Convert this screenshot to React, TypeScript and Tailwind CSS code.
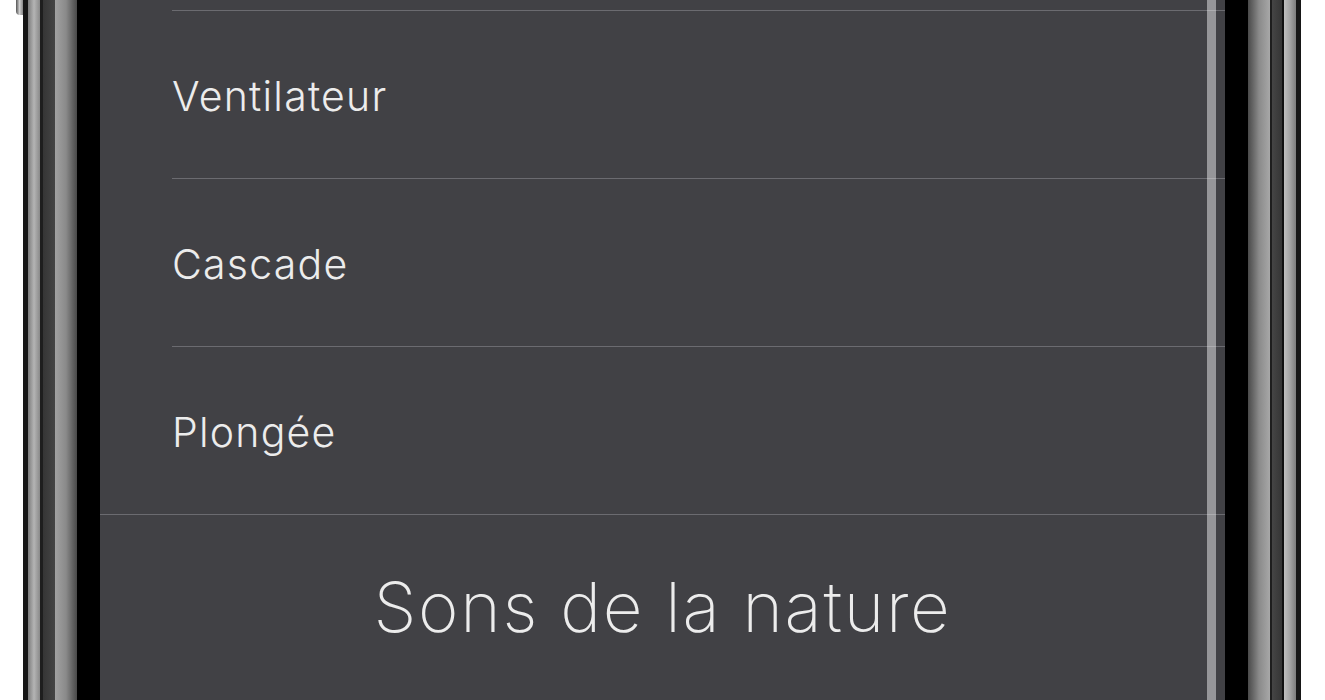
const rows = ["Ventilateur", "Cascade", "Plongée"];

function Bezel({ side }: { side: "left" | "right" }) {
  if (side === "left") {
    return (
      <div className="flex h-full shrink-0">
        <div className="w-[5px] bg-[#161616]" />
        <div className="w-[12px] bg-gradient-to-r from-[#7c7c7c] via-[#b4b4b4] to-[#8a8a8a]" />
        <div className="w-[3px] bg-[#1e1e1e]" />
        <div className="w-[12px] bg-gradient-to-r from-[#353535] to-[#454545]" />
        <div className="w-[22px] bg-gradient-to-r from-[#a2a2a2] via-[#8a8a8a] to-[#4a4a4a]" />
        <div className="w-[23px] bg-black" />
      </div>
    );
  }
  return (
    <div className="flex h-full shrink-0">
      <div className="w-[23px] bg-black" />
      <div className="w-[22px] bg-gradient-to-r from-[#4a4a4a] via-[#8a8a8a] to-[#a8a8a8]" />
      <div className="w-[2px] bg-[#1e1e1e]" />
      <div className="w-[10px] bg-gradient-to-r from-[#454545] to-[#353535]" />
      <div className="w-[2px] bg-[#111]" />
      <div className="w-[12px] bg-gradient-to-r from-[#c0c0c0] via-[#a4a4a4] to-[#7c7c7c]" />
      <div className="w-[5px] bg-[#161616]" />
    </div>
  );
}

export default function App() {
  return (
    <div
      className="relative flex h-[700px] w-[1325px] overflow-hidden bg-white"
      style={{ fontFamily: 'Inter, "Open Sans", sans-serif' }}
    >
      <div className="absolute left-[16px] top-0 h-[15px] w-[7px] rounded-bl-[4px] bg-gradient-to-r from-[#555] via-[#cfcfcf] to-[#888]" />
      <div className="w-[23px] shrink-0" />
      <Bezel side="left" />

      <div className="relative flex h-full w-[1125px] shrink-0 flex-col bg-[#414145] text-[#ececec]">
        <div className="h-[10px]" />
        {rows.map((r) => (
          <div key={r} className="ml-[72px] flex h-[168px] items-center border-t border-[#6b6b70] pt-[3px]">
            <span className="text-[41px] font-light leading-none tracking-[0.03em]">{r}</span>
          </div>
        ))}
        <div className="flex flex-1 justify-center border-t border-[#6b6b70] pt-[58px]">
          <h1 className="text-[69px] font-extralight leading-none tracking-[0.025em]">Sons de la nature</h1>
        </div>
        <div className="absolute right-[9px] top-0 h-full w-[9px] bg-white/45" />
      </div>

      <Bezel side="right" />
      <div className="flex-1" />
    </div>
  );
}
